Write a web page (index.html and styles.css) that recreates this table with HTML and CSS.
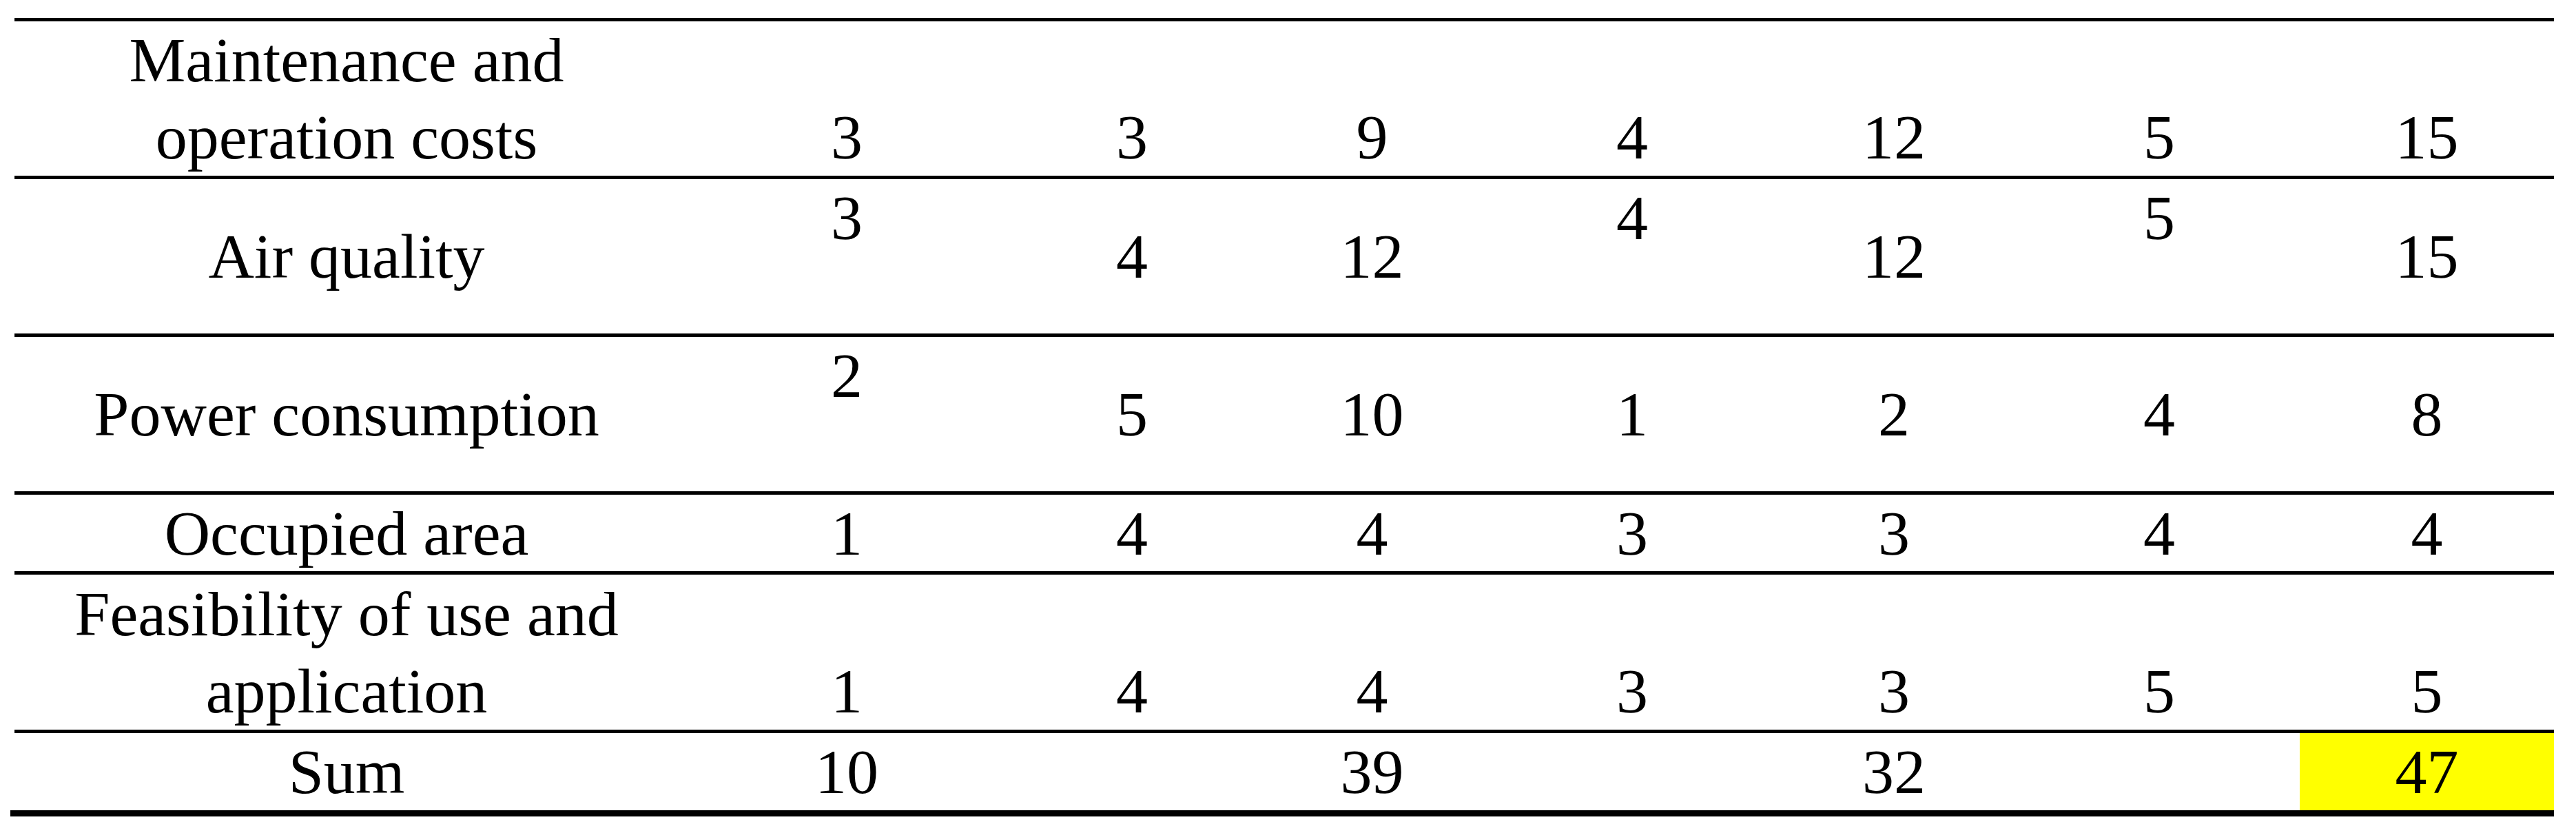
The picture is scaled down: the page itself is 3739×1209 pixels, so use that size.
FILE: index.html
```html
<!DOCTYPE html>
<html lang="en">
<head>
<meta charset="utf-8">
<title>Criteria table</title>
<link rel="stylesheet" href="styles.css">
</head>
<body>
<div class="frame">
  <div class="grid" role="table">
    <div class="cell label">Maintenance and<br>operation costs</div>
    <div class="cell bottom">3</div>
    <div class="cell bottom">3</div>
    <div class="cell bottom">9</div>
    <div class="cell bottom">4</div>
    <div class="cell bottom">12</div>
    <div class="cell bottom">5</div>
    <div class="cell bottom">15</div>

    <div class="cell label">Air quality</div>
    <div class="cell top">3</div>
    <div class="cell">4</div>
    <div class="cell">12</div>
    <div class="cell top">4</div>
    <div class="cell">12</div>
    <div class="cell top">5</div>
    <div class="cell">15</div>

    <div class="cell label">Power consumption</div>
    <div class="cell top">2</div>
    <div class="cell">5</div>
    <div class="cell">10</div>
    <div class="cell">1</div>
    <div class="cell">2</div>
    <div class="cell">4</div>
    <div class="cell">8</div>

    <div class="cell label">Occupied area</div>
    <div class="cell">1</div>
    <div class="cell">4</div>
    <div class="cell">4</div>
    <div class="cell">3</div>
    <div class="cell">3</div>
    <div class="cell">4</div>
    <div class="cell">4</div>

    <div class="cell label">Feasibility of use and<br>application</div>
    <div class="cell bottom">1</div>
    <div class="cell bottom">4</div>
    <div class="cell bottom">4</div>
    <div class="cell bottom">3</div>
    <div class="cell bottom">3</div>
    <div class="cell bottom">5</div>
    <div class="cell bottom">5</div>

    <div class="cell label last">Sum</div>
    <div class="cell last">10</div>
    <div class="cell last"></div>
    <div class="cell last">39</div>
    <div class="cell last"></div>
    <div class="cell last">32</div>
    <div class="cell last"></div>
    <div class="cell last highlight">47</div>
  </div>
</div>
</body>
</html>
```
FILE: styles.css
```css
html, body {
  background: #ffffff;
}

body {
  margin: 0;
  padding: 26px 0 0 15px;
  color: #000000;
  font-family: "Palatino Linotype", "Book Antiqua", Palatino, "Liberation Serif", serif;
  font-size: 92px;
}

.frame {
  width: 3686px;
  padding-left: 6px;
  border-bottom: 9px solid #000000;
}

.grid {
  display: grid;
  grid-template-columns: 964px 488px 340px 357px 398px 362px 408px 369px;
  grid-template-rows: 229px 229px 229px 116px 230px 112px;
  border-top: 5px solid #000000;
}

.cell {
  box-sizing: border-box;
  display: flex;
  flex-direction: column;
  justify-content: center;
  text-align: center;
  line-height: 112px;
  white-space: nowrap;
  border-bottom: 5px solid #000000;
}

.cell.top {
  justify-content: flex-start;
}

.cell.bottom {
  justify-content: flex-end;
}

.cell.last {
  border-bottom: none;
}

.cell.highlight {
  background: #ffff00;
}
```
